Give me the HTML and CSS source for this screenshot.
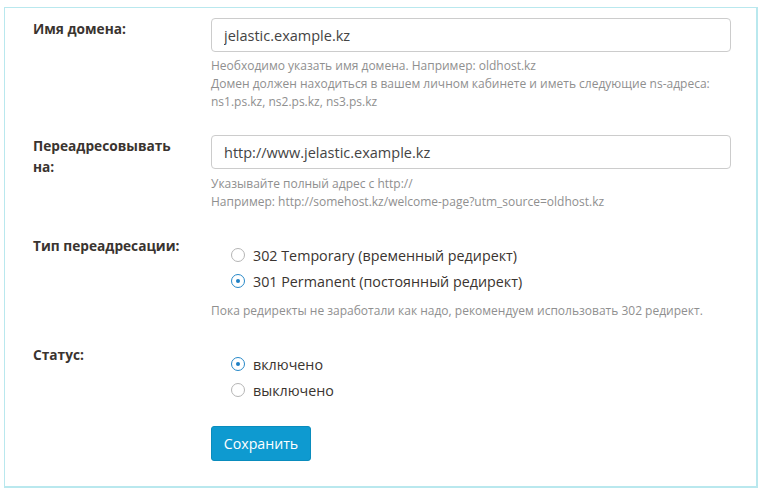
FILE: index.html
```html
<!DOCTYPE html>
<html lang="ru">
<head>
    <meta charset="utf-8">
    <title>Редирект домена</title>
    <link rel="stylesheet" href="styles.css">
</head>
<body>
<div class="panel">
    <form class="form">
        <div class="row">
            <label class="label" for="domain">Имя домена:</label>
            <div class="field">
                <input id="domain" class="input" type="text" value="jelastic.example.kz">
                <p class="help">Необходимо указать имя домена. Например: oldhost.kz<br>
                    Домен должен находиться в вашем личном кабинете и иметь следующие ns-адреса:<br>
                    ns1.ps.kz, ns2.ps.kz, ns3.ps.kz</p>
            </div>
        </div>
        <div class="row">
            <label class="label" for="target">Переадресовывать на:</label>
            <div class="field">
                <input id="target" class="input" type="text" value="http://www.jelastic.example.kz">
                <p class="help help-tight">Указывайте полный адрес с http://<br>
                    Например: http://somehost.kz/welcome-page?utm_source=oldhost.kz</p>
            </div>
        </div>
        <div class="row">
            <span class="label">Тип переадресации:</span>
            <div class="field">
                <div class="radios">
                    <label class="radio"><i class="dot"></i>302 Temporary (временный редирект)</label>
                    <label class="radio"><i class="dot on"></i>301 Permanent (постоянный редирект)</label>
                </div>
                <p class="help help-radio">Пока редиректы не заработали как надо, рекомендуем использовать 302 редирект.</p>
            </div>
        </div>
        <div class="row">
            <span class="label">Статус:</span>
            <div class="field">
                <div class="radios">
                    <label class="radio"><i class="dot on"></i>включено</label>
                    <label class="radio"><i class="dot"></i>выключено</label>
                </div>
                <button class="btn" type="button">Сохранить</button>
            </div>
        </div>
    </form>
</div>
</body>
</html>
```

FILE: styles.css
```css
body {
    margin: 0;
    background: #fff;
    font-family: "Open Sans", "Noto Sans", sans-serif;
    color: #333;
}

.panel {
    width: 754px;
    height: 481px;
    box-sizing: border-box;
    margin: 7px 0 0 4px;
    border: 1px solid #b9e8ee;
    border-right-width: 2px;
    border-bottom-width: 2px;
    padding: 10px 0 0 28px;
}

.row {
    display: grid;
    grid-template-columns: 178px 520px;
    margin-bottom: 24px;
}

.label {
    font-size: 13.7px;
    font-weight: bold;
    line-height: 21px;
    color: #3a3430;
    padding-right: 26px;
}

.input {
    display: block;
    width: 100%;
    height: 34px;
    box-sizing: border-box;
    padding: 0 12px;
    border: 1px solid #ccc;
    border-radius: 4px;
    font-family: inherit;
    font-size: 14.5px;
    color: #444;
    outline: none;
}

.help {
    margin: 5px 0 0;
    font-size: 12px;
    line-height: 18px;
    color: #8f8f8f;
}

.help-tight {
    margin-top: 6px;
}

.help-radio {
    margin-top: 8px;
}

/*радио-кнопки*/
.radios {
    padding: 7px 0 0 20px;
}

.radio {
    display: flex;
    align-items: center;
    height: 26px;
    font-size: 14.3px;
    color: #3a3430;
}

.dot {
    position: relative;
    width: 14px;
    height: 14px;
    box-sizing: border-box;
    margin-right: 8px;
    border: 1px solid #b5b5b5;
    border-radius: 50%;
}

.dot.on {
    border-color: #2688c8;
}

.dot.on::after {
    content: "";
    position: absolute;
    left: 4px;
    top: 4px;
    width: 4px;
    height: 4px;
    border-radius: 50%;
    background: #1d7fc4;
}

.btn {
    display: block;
    margin-top: 23px;
    width: 100px;
    height: 35px;
    border: 1px solid #0a8cbd;
    border-radius: 3px;
    background: #0e9ad0;
    color: #fff;
    font-family: inherit;
    font-size: 14.2px;
}
```
